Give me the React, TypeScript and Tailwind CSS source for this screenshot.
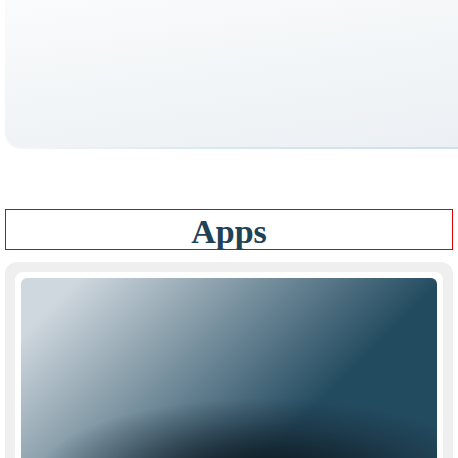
import React from "react";

export default function App() {
  return (
    <div className="w-[458px] h-[458px] overflow-hidden bg-white font-['Liberation_Serif',serif]">
      <div className="ml-[5px] mr-[-24px] pb-[2px] rounded-bl-[16px] bg-[linear-gradient(90deg,#f3f7f9_0%,#dbe8ef_40%,#cbdfe9_100%)]">
        <div className="h-[147px] rounded-bl-[16px] bg-[linear-gradient(172deg,#fafbfc_0%,#f3f6f8_45%,#ebf0f4_100%)]" />
      </div>

      <div className="mt-[60px] ml-[5px] w-[448px] h-[41px] border border-[#e00000] flex items-center justify-center">
        <h1 className="text-[34px] leading-none font-bold text-[#1e4256] mt-[4px]">Apps</h1>
      </div>

      <div className="mt-[12px] ml-[5px] w-[448px] rounded-[12px] bg-[#efefef] p-[10px]">
        <div className="rounded-[8px] bg-white p-[6px]">
          <div className="h-[260px] rounded-[6px] bg-[radial-gradient(ellipse_230px_78px_at_245px_198px,rgba(14,22,28,0.95)_0%,rgba(16,26,34,0.7)_35%,rgba(18,30,40,0.3)_70%,rgba(20,35,45,0)_100%),linear-gradient(135deg,#d0d8df_40px,#234b60_300px)]" />
        </div>
      </div>
    </div>
  );
}
